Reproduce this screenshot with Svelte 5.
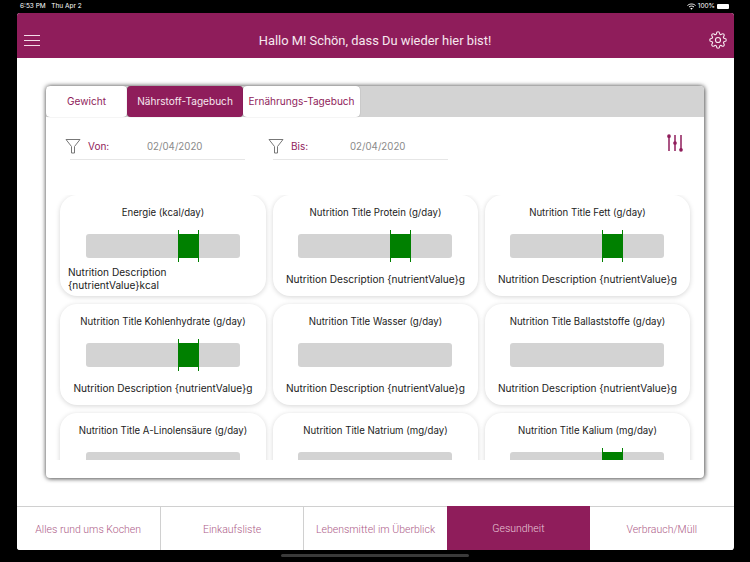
<script>
	const tabs = ['Gewicht', 'Nährstoff-Tagebuch', 'Ernährungs-Tagebuch'];
	const navItems = ['Alles rund ums Kochen', 'Einkaufsliste', 'Lebensmittel im Überblick', 'Gesundheit', 'Verbrauch/Müll'];

	const nutrients = [
		{ title: 'Energie (kcal/day)', desc: 'Nutrition Description {nutrientValue}kcal', marker: true, wrap: true },
		{ title: 'Nutrition Title Protein (g/day)', desc: 'Nutrition Description {nutrientValue}g', marker: true },
		{ title: 'Nutrition Title Fett (g/day)', desc: 'Nutrition Description {nutrientValue}g', marker: true },
		{ title: 'Nutrition Title Kohlenhydrate (g/day)', desc: 'Nutrition Description {nutrientValue}g', marker: true },
		{ title: 'Nutrition Title Wasser (g/day)', desc: 'Nutrition Description {nutrientValue}g', marker: false },
		{ title: 'Nutrition Title Ballaststoffe (g/day)', desc: 'Nutrition Description {nutrientValue}g', marker: false },
		{ title: 'Nutrition Title A-Linolensäure (g/day)', desc: '', marker: false },
		{ title: 'Nutrition Title Natrium (mg/day)', desc: '', marker: false },
		{ title: 'Nutrition Title Kalium (mg/day)', desc: '', marker: true }
	];
</script>

<div class="status-bar">
	<span class="status-time">6:53 PM&nbsp;&nbsp;&nbsp;Thu Apr 2</span>
	<span class="status-right">
		<svg width="9" height="7" viewBox="0 0 18 14" fill="none" stroke="#fff">
			<path d="M1 5c4.500-4 11.500-4 16 0" stroke-width="2" />
			<path d="M4 8c3-2.500 7-2.500 10 0" stroke-width="2" />
			<path d="M9 13.500 6.500 10.500c1.500-1 3.500-1 5 0z" fill="#fff" stroke="none" />
		</svg>
		<span>100%</span>
		<span class="battery"></span>
	</span>
</div>

<div class="screen">
	<header class="app-header">
		<button class="menu-btn" aria-label="Menü">
			<span></span><span></span><span></span>
		</button>
		<h1>Hallo M! Schön, dass Du wieder hier bist!</h1>
		<svg class="gear" width="18" height="18" viewBox="0 0 24 24" fill="none" stroke="#f6e8ef" stroke-width="1.500" stroke-linejoin="round">
			<circle cx="12" cy="12" r="3.400" />
			<path d="M19.400 15a1.650 1.650 0 0 0 .33 1.820l.06.06a2 2 0 0 1 0 2.830 2 2 0 0 1-2.830 0l-.06-.06a1.650 1.650 0 0 0-1.820-.33 1.650 1.650 0 0 0-1 1.510V21a2 2 0 0 1-2 2 2 2 0 0 1-2-2v-.09A1.650 1.650 0 0 0 9 19.400a1.650 1.650 0 0 0-1.820.33l-.06.06a2 2 0 0 1-2.830 0 2 2 0 0 1 0-2.830l.06-.06a1.650 1.650 0 0 0 .33-1.820 1.650 1.650 0 0 0-1.510-1H3a2 2 0 0 1-2-2 2 2 0 0 1 2-2h.09A1.650 1.650 0 0 0 4.600 9a1.650 1.650 0 0 0-.33-1.820l-.06-.06a2 2 0 0 1 0-2.830 2 2 0 0 1 2.830 0l.06.06a1.650 1.650 0 0 0 1.820.33H9a1.650 1.650 0 0 0 1-1.510V3a2 2 0 0 1 2-2 2 2 0 0 1 2 2v.09a1.650 1.650 0 0 0 1 1.510 1.650 1.650 0 0 0 1.820-.33l.06-.06a2 2 0 0 1 2.830 0 2 2 0 0 1 0 2.830l-.06.06a1.650 1.650 0 0 0-.33 1.820V9a1.650 1.650 0 0 0 1.510 1H21a2 2 0 0 1 2 2 2 2 0 0 1-2 2h-.09a1.650 1.650 0 0 0-1.510 1z" />
		</svg>
	</header>

	<main class="content">
		<section class="panel">
			<div class="tabs">
				{#each tabs as tab, i}
					<button class="tab" class:active={i === 1}>{tab}</button>
				{/each}
			</div>

			<div class="filters">
				<div class="filter">
					<svg width="16" height="16" viewBox="0 0 16 16" fill="none" stroke="#777" stroke-width="1">
						<path d="M1 1.500h14L9.500 8.500v6.500h-3V8.500z" stroke-linejoin="round" />
					</svg>
					<span class="filter-label">Von:</span>
					<span class="filter-date">02/04/2020</span>
				</div>
				<div class="filter">
					<svg width="16" height="16" viewBox="0 0 16 16" fill="none" stroke="#777" stroke-width="1">
						<path d="M1 1.500h14L9.500 8.500v6.500h-3V8.500z" stroke-linejoin="round" />
					</svg>
					<span class="filter-label">Bis:</span>
					<span class="filter-date">02/04/2020</span>
				</div>
				<svg class="sliders" width="16" height="18" viewBox="0 0 16 18" fill="#8f1d5b" stroke="#8f1d5b" stroke-width="1.500">
					<path d="M2 1v16M8 1v16M14 1v16" />
					<circle cx="2" cy="2.200" r="1.100" />
					<circle cx="8" cy="9" r="1.100" />
					<circle cx="14" cy="15.800" r="1.100" />
				</svg>
			</div>

			<div class="grid-clip">
				<div class="grid">
					{#each nutrients as item}
						<article class="card">
							<h2>{item.title}</h2>
							<div class="bar">
								{#if item.marker}
									<div class="marker"></div>
								{/if}
							</div>
							<p class:wrap={item.wrap}>{item.desc}</p>
						</article>
					{/each}
				</div>
			</div>
		</section>
	</main>

	<nav class="bottom-nav">
		{#each navItems as item, i}
			<button class="nav-item" class:active={i === 3}>{item}</button>
		{/each}
	</nav>
</div>

<div class="home-indicator"></div>

<style>
	:global(body) {
		margin: 0;
		background: #000;
		overflow: hidden;
	}

	.status-bar {
		height: 13px;
		display: flex;
		justify-content: space-between;
		align-items: center;
		padding: 0 21px 1px 20px;
		box-sizing: border-box;
		color: #fff;
		font: 6.500px "Inter", sans-serif;
	}

	.status-right {
		display: flex;
		align-items: center;
		gap: 2px;
	}

	.battery {
		width: 12px;
		height: 5px;
		background: #fff;
		border-radius: 1px;
	}

	.screen {
		width: 717px;
		height: 537px;
		margin-left: 16.500px;
		background: #fff;
		border-radius: 3px;
		overflow: hidden;
		display: flex;
		flex-direction: column;
	}

	.app-header {
		height: 45px;
		flex-shrink: 0;
		padding-top: 9px;
		box-sizing: border-box;
		background: #8f1d5b;
		display: flex;
		align-items: center;
		justify-content: center;
		position: relative;
	}

	.app-header h1 {
		margin: 0;
		font: 400 12.900px "Roboto", sans-serif;
		color: #f6e8ef;
	}

	.menu-btn {
		position: absolute;
		left: 7.500px;
		top: 22px;
		width: 16px;
		padding: 0;
		background: none;
		border: none;
		display: flex;
		flex-direction: column;
		gap: 4px;
	}

	.menu-btn span {
		height: 1px;
		background: #f3dde8;
	}

	.gear {
		position: absolute;
		right: 7px;
		top: 18px;
	}

	.content {
		flex: 1;
		min-height: 0;
		padding: 28px 29.500px 29px;
		box-sizing: border-box;
	}

	.panel {
		height: 392px;
		background: #fff;
		border-radius: 4px;
		box-shadow: 0 0 5px rgba(0, 0, 0, .65), 1px 1px 4px rgba(0, 0, 0, .3);
		overflow: hidden;
	}

	.tabs {
		height: 31px;
		background: #d3d3d3;
		display: flex;
	}

	.tab {
		height: 31px;
		padding: 0 0 1px;
		background: #fff;
		border: none;
		border-radius: 4px;
		color: #8f1d5b;
		font: 400 10.100px "Inter", sans-serif;
		box-shadow: 0 0 1px rgba(0, 0, 0, .4);
	}

	.tab:nth-child(1) { width: 81px; }
	.tab:nth-child(2) { width: 116px; }
	.tab:nth-child(3) { width: 117px; }

	.tab.active {
		background: #8f1d5b;
		color: #f6e8ef;
	}

	.filters {
		height: 78px;
		padding: 20px 21px 0 24px;
		box-sizing: border-box;
		display: flex;
		align-items: flex-start;
		gap: 28px;
		position: relative;
	}

	.filter {
		width: 175px;
		height: 23px;
		padding-bottom: 4px;
		box-sizing: border-box;
		display: flex;
		align-items: center;
		border-bottom: 1px solid #e6e6e6;
		font: 400 10px "Inter", sans-serif;
	}

	.filter svg {
		margin-left: -5px;
		margin-right: 7px;
		flex-shrink: 0;
	}

	.filter-label {
		color: #8f1d5b;
		width: 59px;
		flex-shrink: 0;
	}

	.filter-date {
		color: #8a8a8a;
		font-size: 9.700px;
	}

	.sliders {
		position: absolute;
		right: 21px;
		top: 17px;
	}

	.grid-clip {
		height: 265px;
		overflow: hidden;
		padding: 0 14px;
	}

	.grid {
		display: grid;
		grid-template-columns: 206px 205px 205px;
		column-gap: 7px;
		row-gap: 8px;
	}

	.card {
		height: 101px;
		box-sizing: border-box;
		padding-top: 11px;
		background: #fff;
		border-radius: 17px;
		box-shadow: 0 1px 5px rgba(0, 0, 0, .17);
		display: flex;
		flex-direction: column;
		align-items: center;
		font-family: "Inter", sans-serif;
		color: #222;
	}

	.card h2 {
		margin: 0;
		height: 13px;
		line-height: 13px;
		font-size: 9.650px;
		font-weight: 400;
	}

	.bar {
		width: 154px;
		height: 24px;
		margin-top: 15px;
		background: #d3d3d3;
		border-radius: 3px;
		position: relative;
		flex-shrink: 0;
		left: -0.500px;
	}

	.marker {
		position: absolute;
		left: 92px;
		top: -4px;
		width: 21px;
		height: 32px;
		box-sizing: border-box;
		border-left: 1px solid #008000;
		border-right: 1px solid #008000;
		background: linear-gradient(#008000, #008000) center / 100% 24px no-repeat;
	}

	.card p {
		margin: 15px 0 0;
		font-size: 10.100px;
		line-height: 13px;
		white-space: nowrap;
	}

	.card p.wrap {
		margin-top: 8px;
		white-space: normal;
		align-self: flex-start;
		padding-left: 8px;
		width: 130px;
	}

	.bottom-nav {
		height: 44px;
		flex-shrink: 0;
		display: grid;
		grid-template-columns: repeat(5, 1fr);
		border-top: 1px solid #d0d0d0;
		box-sizing: border-box;
	}

	.nav-item {
		padding: 1px 0 0;
		background: #fff;
		border: none;
		border-left: 1px solid #d0d0d0;
		color: #ad5c88;
		font: 300 10.500px "Roboto", sans-serif;
	}

	.nav-item:first-child {
		border-left: none;
	}

	.nav-item.active {
		background: #8f1d5b;
		color: #e9c9da;
		border-left: none;
		margin-top: -1px;
	}

	.nav-item.active + .nav-item {
		border-left: none;
	}

	.home-indicator {
		width: 188px;
		height: 3px;
		margin: 4px 0 0 281px;
		background: #3a3a3a;
		border-radius: 2px;
	}
</style>
